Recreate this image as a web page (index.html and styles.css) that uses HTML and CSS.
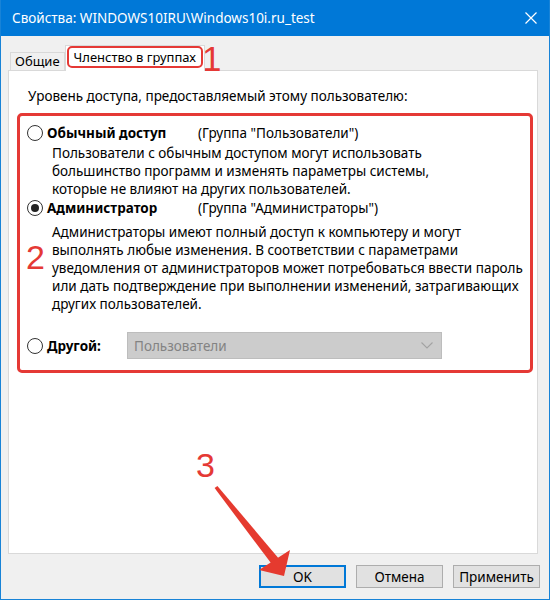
FILE: index.html
```html
<!DOCTYPE html>
<html lang="ru">
<head>
    <meta charset="UTF-8">
    <title>Свойства: WINDOWS10IRU\Windows10i.ru_test</title>
    <link rel="stylesheet" href="styles.css">
</head>
<body>
    <div class="window">
        <div class="titlebar">
            <span class="title">Свойства: WINDOWS10IRU\Windows10i.ru_test</span>
            <svg class="close" width="12" height="12" viewBox="0 0 12 12">
                <path d="M0.5 0.5 L11.5 11.5 M11.5 0.5 L0.5 11.5" stroke="#fff" stroke-width="1.2" fill="none"/>
            </svg>
        </div>
        <div class="body">
            <div class="tabs">
                <div class="tab">Общие</div>
                <div class="tab active"><span class="mark">Членство в группах</span></div>
            </div>
            <div class="panel">
                <p class="lead">Уровень доступа, предоставляемый этому пользователю:</p>
                <div class="choices">
                    <span class="num num-2">2</span>
                    <div class="option">
                        <span class="radio"></span>
                        <span class="opt-name">Обычный доступ</span>
                        <span class="opt-group">(Группа "Пользователи")</span>
                    </div>
                    <p class="desc">Пользователи с обычным доступом могут использовать<br>большинство программ и изменять параметры системы,<br>которые не влияют на других пользователей.</p>
                    <div class="option option-admin">
                        <span class="radio checked"></span>
                        <span class="opt-name">Администратор</span>
                        <span class="opt-group">(Группа "Администраторы")</span>
                    </div>
                    <p class="desc desc-admin">Администраторы имеют полный доступ к компьютеру и могут<br>выполнять любые изменения. В соответствии с параметрами<br>уведомления от администраторов может потребоваться ввести пароль<br>или дать подтверждение при выполнении изменений, затрагивающих<br>других пользователей.</p>
                    <div class="option option-other">
                        <span class="radio"></span>
                        <span class="opt-name opt-short">Другой:</span>
                        <div class="combo">
                            <span>Пользователи</span>
                            <svg width="12" height="7" viewBox="0 0 12 7">
                                <path d="M0.5 0.5 L6 6 L11.5 0.5" stroke="#a3a3a3" stroke-width="1.1" fill="none"/>
                            </svg>
                        </div>
                    </div>
                </div>
            </div>
            <div class="buttons">
                <button class="btn btn-default">OK</button>
                <button class="btn">Отмена</button>
                <button class="btn">Применить</button>
            </div>
        </div>

        <span class="num num-1">1</span>
        <span class="num num-3">3</span>
        <svg class="arrow" width="550" height="600" viewBox="0 0 550 600">
            <polygon points="216.4,485.9 213.6,488.1 270.5,563.8 277.5,558.2" fill="#e53a2f"/>
            <polygon points="258,570 289,550 283,576" fill="#e53a2f"/>
        </svg>
    </div>
</body>
</html>
```

FILE: styles.css
```css
body {
    margin: 0;
    font-family: "Noto Sans", sans-serif;
    font-size: 13.5px;
    color: #000;
}
.window {
    position: relative;
    width: 550px;
    height: 600px;
    box-sizing: border-box;
    border: 1px solid #1883d7;
    border-top: none;
    background: #f0f0f0;
    display: flex;
    flex-direction: column;
}
.titlebar {
    flex: none;
    height: 36px;
    background: #0078d7;
    color: #fff;
    display: flex;
    align-items: center;
    justify-content: space-between;
    padding: 0 12px 0 11px;
    font-size: 13.5px;
}
.body {
    flex: 1;
    display: flex;
    flex-direction: column;
    padding: 9px 9px 0 7px;
}
.tabs {
    display: flex;
    align-items: flex-end;
    height: 25px;
    padding-left: 2px;
    font-size: 13px;
}
.tab {
    height: 17px;
    line-height: 17px;
    padding: 0 4px;
    border: 1px solid #d9d9d9;
    border-bottom: none;
    background: #f0f0f0;
}
.tab.active {
    position: relative;
    z-index: 1;
    height: 25px;
    margin-bottom: -1px;
    padding: 0 1px;
    background: #fff;
}
.mark {
    display: block;
    height: 18px;
    line-height: 18px;
    padding: 0 5px;
    border: 2px solid #e53935;
    border-radius: 5px;
}
.panel {
    flex: none;
    height: 484px;
    box-sizing: border-box;
    margin-right: 2px;
    background: #fff;
    border: 1px solid #d9d9d9;
    padding: 16px 4px 0 8px;
}
.lead {
    margin: 0 0 8px 11px;
    line-height: 18px;
}
.choices {
    position: relative;
    border: 3px solid #e53935;
    border-radius: 5px;
    padding: 8px 0 11px 7px;
}
.option {
    display: flex;
    align-items: center;
    height: 18px;
}
.option-admin {
    margin-top: 1px;
}
.option-other {
    height: 27px;
    margin-top: 19px;
}
.radio {
    width: 16px;
    height: 16px;
    box-sizing: border-box;
    border: 1.5px solid #333;
    border-radius: 50%;
    margin-right: 4px;
    background: #fff;
    display: flex;
    align-items: center;
    justify-content: center;
}
.radio.checked::after {
    content: "";
    width: 8px;
    height: 8px;
    border-radius: 50%;
    background: #222;
}
.opt-name {
    width: 151px;
    font-weight: bold;
}
.opt-short {
    width: 80px;
}
.desc {
    margin: 2px 0 0 25px;
    line-height: 18px;
    white-space: nowrap;
}
.desc-admin {
    margin-top: 6px;
}
.combo {
    width: 315px;
    height: 27px;
    box-sizing: border-box;
    background: #cccccc;
    border: 1px solid #bdbdbd;
    color: #838383;
    display: flex;
    align-items: center;
    justify-content: space-between;
    padding: 0 8px 0 6px;
}
.buttons {
    display: flex;
    justify-content: flex-end;
    gap: 10px;
    margin-top: 11px;
}
.btn {
    width: 87px;
    height: 23px;
    box-sizing: border-box;
    border: 1px solid #adadad;
    background: #e1e1e1;
    font-family: "Noto Sans", sans-serif;
    font-size: 13.5px;
    padding: 0;
}
.btn-default {
    border: 2px solid #0078d7;
}
.num {
    position: absolute;
    font-family: "Liberation Sans", sans-serif;
    line-height: 1;
    color: #e53935;
}
.num-1 {
    left: 201px;
    top: 41px;
    font-size: 35px;
}
.num-2 {
    left: 6px;
    top: 124px;
    font-size: 34px;
}
.num-3 {
    left: 195px;
    top: 448px;
    font-size: 34px;
}
.arrow {
    position: absolute;
    left: 0;
    top: 0;
    pointer-events: none;
}
```
